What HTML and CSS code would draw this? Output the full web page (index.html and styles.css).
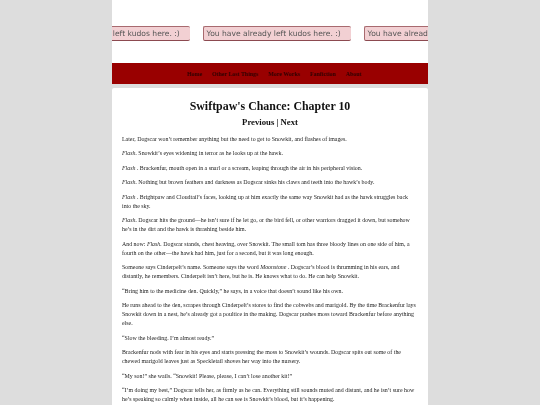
FILE: index.html
```html
<!DOCTYPE html>
<html lang="en">
<head>
<meta charset="utf-8">
<title>Swiftpaw's Chance: Chapter 10</title>
<link rel="stylesheet" href="styles.css">
</head>
<body>
<div class="page">
  <header class="top">
    <div class="kudos-row">
      <div class="kudos">You have already left kudos here. :)</div>
      <div class="kudos">You have already left kudos here. :)</div>
      <div class="kudos">You have already left kudos here. :)</div>
    </div>
    <nav class="nav">
      <a href="#">Home</a>
      <a href="#">Other Lost Things</a>
      <a href="#">More Works</a>
      <a href="#">Fanfiction</a>
      <a href="#">About</a>
    </nav>
  </header>
  <main class="story">
    <h1>Swiftpaw's Chance: Chapter 10</h1>
    <h2>Previous | Next</h2>
    <p>Later, Dogscar won’t remember anything but the need to get to Snowkit, and flashes of images.</p>
    <p><em>Flash.</em> Snowkit’s eyes widening in terror as he looks up at the hawk.</p>
    <p><em>Flash</em> . Brackenfur, mouth open in a snarl or a scream, leaping through the air in his peripheral vision.</p>
    <p><em>Flash.</em> Nothing but brown feathers and darkness as Dogscar sinks his claws and teeth into the hawk’s body.</p>
    <p><em>Flash</em> . Brightpaw and Cloudtail’s faces, looking up at him exactly the same way Snowkit had as the hawk struggles back into the sky.</p>
    <p><em>Flash.</em> Dogscar hits the ground—he isn’t sure if he let go, or the bird fell, or other warriors dragged it down, but somehow he’s in the dirt and the hawk is thrashing beside him.</p>
    <p>And now: <em>Flash.</em> Dogscar stands, chest heaving, over Snowkit. The small tom has three bloody lines on one side of him, a fourth on the other—the hawk had him, just for a second, but it was long enough.</p>
    <p>Someone says Cinderpelt’s name. Someone says the word <em>Moonstone</em> . Dogscar’s blood is thrumming in his ears, and distantly, he remembers. Cinderpelt isn’t here, but he is. He knows what to do. He can help Snowkit.</p>
    <p>“Bring him to the medicine den. Quickly,” he says, in a voice that doesn’t sound like his own.</p>
    <p>He runs ahead to the den, scrapes through Cinderpelt’s stores to find the cobwebs and marigold. By the time Brackenfur lays Snowkit down in a nest, he’s already got a poultice in the making. Dogscar pushes moss toward Brackenfur before anything else.</p>
    <p>“Slow the bleeding. I’m almost ready.”</p>
    <p>Brackenfur nods with fear in his eyes and starts pressing the moss to Snowkit’s wounds. Dogscar spits out some of the chewed marigold leaves just as Speckletail shoves her way into the nursery.</p>
    <p>“My son!” she wails. “Snowkit! Please, please, I can’t lose another kit!”</p>
    <p>“I’m doing my best,” Dogscar tells her, as firmly as he can. Everything still sounds muted and distant, and he isn’t sure how he’s speaking so calmly when inside, all he can see is Snowkit’s blood, but it’s happening.</p>
  </main>
</div>
</body>
</html>
```
FILE: styles.css
```css
html, body {
  margin: 0;
  padding: 0;
  height: 405px;
  overflow: hidden;
  background: #dddddd;
}
.page {
  width: 316px;
  margin: 0 auto;
  font-family: "Liberation Serif", serif;
  color: #222;
  filter: blur(0.25px);
}
.top {
  background: #fff;
  height: 84px;
  display: flex;
  flex-direction: column;
}
.kudos-row {
  height: 63px;
  padding-top: 26px;
  box-sizing: border-box;
  display: flex;
  gap: 13px;
  overflow: hidden;
  align-items: flex-start;
}
.kudos {
  flex: none;
  width: 148px;
  height: 15px;
  box-sizing: border-box;
  background: #f2d0d3;
  border: 0.5px solid #a86a6f;
  border-right: none;
  border-bottom: 1px solid #8c4a50;
  border-radius: 2px;
  font: 7.6px/14px "DejaVu Sans", sans-serif;
  color: #555;
  padding-left: 3px;
  white-space: nowrap;
  overflow: hidden;
}
.kudos:first-child {
  margin-left: -70.5px;
}
.nav {
  height: 21px;
  background: #990000;
  display: flex;
  justify-content: center;
  align-items: center;
  gap: 10px;
  padding-left: 8px;
}
.nav a {
  font-size: 5.9px;
  font-weight: bold;
  color: #330000;
  text-decoration: none;
}
.story {
  margin-top: 4px;
  background: #fff;
  border-radius: 2px 2px 0 0;
  padding: 10.5px 10px 0;
  height: 317px;
  box-sizing: border-box;
  overflow: hidden;
}
h1 {
  margin: 0;
  font-size: 11.9px;
  line-height: 14px;
  text-align: center;
  color: #111;
}
h2 {
  margin: 4.5px 0 6.5px;
  font-size: 8.7px;
  line-height: 11px;
  text-align: center;
  color: #111;
}
p {
  margin: 0 0 5.5px;
  font-size: 5.9px;
  line-height: 9px;
}
```
